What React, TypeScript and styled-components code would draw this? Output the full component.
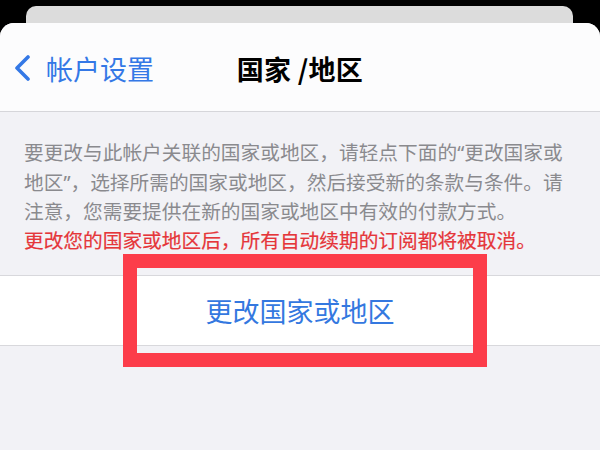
import React from "react";
import styled, { createGlobalStyle } from "styled-components";

const Global = createGlobalStyle`
  html, body { margin: 0; padding: 0; background: #000; }
  body { font-family: "Noto Sans CJK SC", "Noto Sans", sans-serif; }
`;

const Screen = styled.div`
  width: 600px;
  height: 450px;
  display: flex;
  flex-direction: column;
  padding-top: 6px;
  box-sizing: border-box;
  overflow: hidden;
  background: #000;
`;

const BackCard = styled.div`
  height: 17px;
  margin: 0 27px 0 26px;
  background: #dcdcdc;
  border-radius: 10px 10px 0 0;
  flex-shrink: 0;
`;

const Sheet = styled.div`
  flex: 1;
  background: #f2f2f6;
  border-radius: 14px 14px 0 0;
  overflow: hidden;
  display: flex;
  flex-direction: column;
`;

const NavBar = styled.div`
  height: 89px;
  flex-shrink: 0;
  background: #fcfcfd;
  border-bottom: 1px solid #d6d6da;
  display: grid;
  grid-template-columns: 1fr auto 1fr;
  align-items: center;
  padding: 0 14px;
  box-sizing: border-box;
`;

const BackButton = styled.div`
  display: flex;
  align-items: center;
  gap: 14px;
  color: #3478e6;
  font-size: 27px;
  line-height: 1;
  padding-top: 2px;
`;

const Title = styled.div`
  color: #000;
  font-size: 27px;
  font-weight: 700;
  line-height: 1;
  padding-top: 2px;
  letter-spacing: 0.3px;
`;

const Description = styled.div`
  padding: 26px 24px 0 24px;
  font-size: 19.7px;
  line-height: 28.5px;
  color: #8a8a8e;
`;

const Quote = styled.span`
  font-family: "Noto Sans", sans-serif;
`;

const Warning = styled.div`
  color: #e5363a;
  font-weight: 400;
  -webkit-text-stroke: 0.2px #e5363a;
`;

const ButtonRow = styled.div`
  position: relative;
  margin-top: 21px;
  height: 71px;
  background: #fff;
  border-top: 1px solid #d8d8dc;
  border-bottom: 1px solid #d8d8dc;
  display: flex;
  align-items: center;
  justify-content: center;
  color: #3478e0;
  font-size: 27px;
  box-sizing: border-box;
`;

const Highlight = styled.div`
  position: absolute;
  left: 123px;
  top: -22px;
  width: 364px;
  height: 113px;
  border: 14px solid #fc3d4a;
  box-sizing: border-box;
  pointer-events: none;
`;

const Chevron = () => (
  <svg width="18" height="26" viewBox="0 0 18 26" fill="none">
    <polyline
      points="14,2 3,13 14,24"
      stroke="#3478e6"
      strokeWidth="3.6"
      strokeLinecap="round"
      strokeLinejoin="round"
    />
  </svg>
);

export default function App() {
  return (
    <>
      <Global />
      <Screen>
        <BackCard />
        <Sheet>
          <NavBar>
            <BackButton>
              <Chevron />
              <span>帐户设置</span>
            </BackButton>
            <Title>国家 /地区</Title>
            <div />
          </NavBar>
          <Description>
            要更改与此帐户关联的国家或地区，请轻点下面的<Quote>“</Quote>更改国家或
            <br />
            地区<Quote>”</Quote>，选择所需的国家或地区，然后接受新的条款与条件。请
            <br />
            注意，您需要提供在新的国家或地区中有效的付款方式。
            <Warning>更改您的国家或地区后，所有自动续期的订阅都将被取消。</Warning>
          </Description>
          <ButtonRow>
            更改国家或地区
            <Highlight />
          </ButtonRow>
        </Sheet>
      </Screen>
    </>
  );
}
